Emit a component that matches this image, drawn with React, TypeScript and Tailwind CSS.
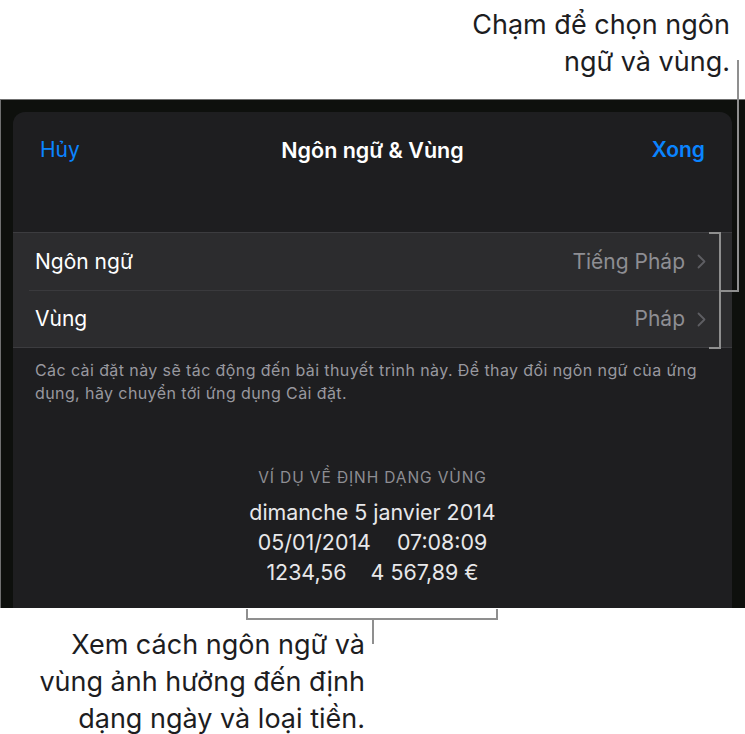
import React from 'react';

const ROWS = [
  { label: 'Ngôn ngữ', value: 'Tiếng Pháp' },
  { label: 'Vùng', value: 'Pháp' },
];

const Chevron = () => (
  <svg width="9" height="15" viewBox="0 0 9 15" fill="none" className="ml-[12px]">
    <path d="M1.5 1.5 L7.5 7.5 L1.5 13.5" stroke="#5e5e63" strokeWidth="1.8" strokeLinecap="round" strokeLinejoin="round" />
  </svg>
);

// leader lines of the callouts, drawn over the screenshot
const Leaders = () => (
  <svg className="absolute inset-0 pointer-events-none" width="745" height="734" viewBox="0 0 745 734" fill="none">
    <g stroke="#8f8f8f" strokeWidth="2">
      <path d="M738 60 V291 H720" />
      <path d="M709 233 H720 V348 H709" />
      <path d="M247 609 V619 H497 V609" />
      <path d="M373 619 V644" />
    </g>
  </svg>
);

const App = () => {
  return (
    <div className="relative w-[745px] h-[734px] bg-white overflow-hidden font-['Inter','Liberation_Sans',sans-serif]">
      <div className="h-[99px] flex justify-end pr-[15px] pt-[6px]">
        <p className="text-right text-[27px] leading-[37px] text-[#1d1d1f]">
          Chạm để chọn ngôn
          <br />
          ngữ và vùng.
        </p>
      </div>

      <div className="h-[509px] bg-[#0e100d] border-t border-l border-[#707070] pt-[12px] pl-[12px] pr-[13px] flex flex-col">
        <div className="flex-1 rounded-t-[12px] bg-[#1e1e20] flex flex-col">
          <div className="h-[76px] grid grid-cols-[1fr_auto_1fr] items-center px-[27px]">
            <span className="text-[21px] text-[#0a84ff]">Hủy</span>
            <span className="text-[21.5px] font-semibold text-white">Ngôn ngữ &amp; Vùng</span>
            <span className="text-[21px] font-semibold text-[#0a84ff] text-right">Xong</span>
          </div>

          <div className="mt-[44px] bg-[#2c2c2e] border-y border-[#3c3c3f]">
            {ROWS.map((row, i) => (
              <div key={row.label} className={i > 0 ? 'pl-[16px]' : ''}>
                <div
                  className={
                    'h-[57px] flex items-center pr-[26px] ' +
                    (i > 0 ? 'border-t border-[#3a3a3d] pl-[6px]' : 'pl-[22px]')
                  }
                >
                  <span className="text-[21px] text-white">{row.label}</span>
                  <span className="ml-auto text-[21px] text-[#8e8e93]">{row.value}</span>
                  <Chevron />
                </div>
              </div>
            ))}
          </div>

          <p className="pl-[22px] pr-[10px] pt-[11px] text-[16px] leading-[23px] tracking-[0.4px] text-[#98989f] whitespace-nowrap">
            Các cài đặt này sẽ tác động đến bài thuyết trình này. Để thay đổi ngôn ngữ của ứng
            <br />
            dụng, hãy chuyển tới ứng dụng Cài đặt.
          </p>

          <div className="mt-[63px] flex flex-col items-center">
            <span className="text-[15.5px] leading-[20px] tracking-[0.9px] text-[#8e8e93]">VÍ DỤ VỀ ĐỊNH DẠNG VÙNG</span>
            <div className="mt-[9px] flex flex-col items-center text-[21.4px] leading-[30px] text-[#e8e8ea]">
              <span>dimanche 5 janvier 2014</span>
              <div className="flex gap-[26px]">
                <span>05/01/2014</span>
                <span>07:08:09</span>
              </div>
              <div className="flex gap-[24px]">
                <span>1234,56</span>
                <span>4 567,89 €</span>
              </div>
            </div>
          </div>
        </div>
      </div>

      <div className="w-[365px] pt-[18px]">
        <p className="text-right text-[27px] leading-[37px] text-[#1d1d1f]">
          Xem cách ngôn ngữ và
          <br />
          vùng ảnh hưởng đến định
          <br />
          dạng ngày và loại tiền.
        </p>
      </div>

      <Leaders />
    </div>
  );
};

export default App;
